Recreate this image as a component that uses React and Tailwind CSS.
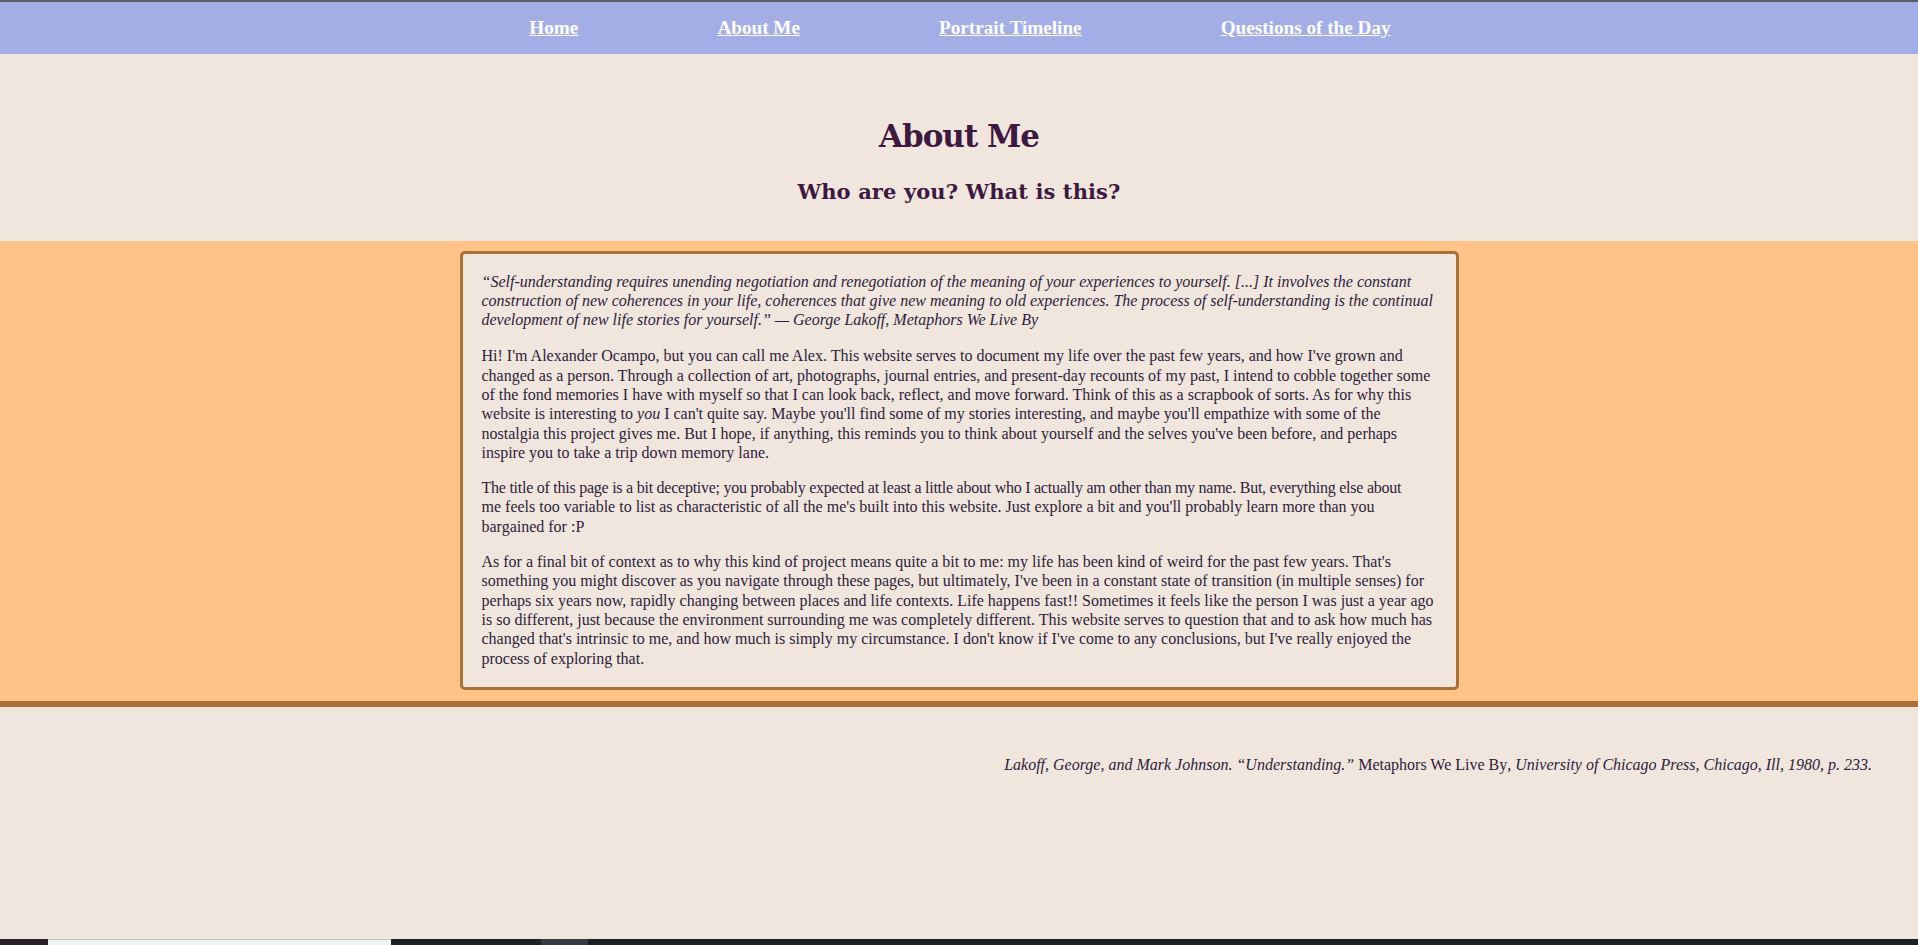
export default function App() {
  const serif = { fontFamily: '"Liberation Serif", "Times New Roman", serif' };
  const heading = { fontFamily: '"DejaVu Serif", Georgia, serif' };
  const links = ["Home", "About Me", "Portrait Timeline", "Questions of the Day"];
  return (
    <div className="min-h-[945px] flex flex-col bg-[#f0e6de]" style={serif}>
      <nav className="border-t-2 border-[#5b5d6b] bg-[#a3aee6] h-[54px] flex items-center justify-center gap-[139px] pl-[2px]">
        {links.map((l) => (
          <a key={l} href="#" className="text-white font-bold underline text-[19.2px] leading-[22px]">
            {l}
          </a>
        ))}
      </nav>
      <header className="pt-[64px] pb-[37px] text-center text-[#3d1840]" style={heading}>
        <h1 className="text-[31px] font-black leading-[37px] tracking-[-1px]">About Me</h1>
        <h2 className="mt-[24px] text-[21px] font-black leading-[25px] tracking-[0.1px]">Who are you? What is this?</h2>
      </header>
      <section className="bg-[#ffc388] border-b-[6px] border-[#a9703a] pt-[10px] pb-[11px]">
        <div className="mx-auto w-[999px] rounded-[5px] border-[3px] border-[#a9703a] bg-[#f0e6de] px-[19px] pt-[19px] pb-[19px] text-[16px] leading-[19.3px] text-[#2e1d3a]">
          <p className="italic leading-[18.8px]">
            “Self-understanding requires unending negotiation and renegotiation of the meaning of your experiences to yourself. [...] It involves the constant construction of new coherences in your life, coherences that give new meaning to old experiences. The process of self-understanding is the continual development of new life stories for yourself.” — George Lakoff, Metaphors We Live By
          </p>
          <p className="mt-[17px]">
            Hi! I'm Alexander Ocampo, but you can call me Alex. This website serves to document my life over the past few years, and how I've grown and changed as a person. Through a collection of art, photographs, journal entries, and present-day recounts of my past, I intend to cobble together some of the fond memories I have with myself so that I can look back, reflect, and move forward. Think of this as a scrapbook of sorts. As for why this website is interesting to <i>you</i> I can't quite say. Maybe you'll find some of my stories interesting, and maybe you'll empathize with some of the nostalgia this project gives me. But I hope, if anything, this reminds you to think about yourself and the selves you've been before, and perhaps inspire you to take a trip down memory lane.
          </p>
          <p className="mt-[16px]">
            <span className="whitespace-nowrap tracking-[-0.25px]">The title of this page is a bit deceptive; you probably expected at least a little about who I actually am other than my name. But, everything else about</span>
            <br />
            me feels too variable to list as characteristic of all the me's built into this website. Just explore a bit and you'll probably learn more than you bargained for :P
          </p>
          <p className="mt-[16px]">
            As for a final bit of context as to why this kind of project means quite a bit to me: my life has been kind of weird for the past few years. That's something you might discover as you navigate through these pages, but ultimately, I've been in a constant state of transition (in multiple senses) for perhaps six years now, rapidly changing between places and life contexts. Life happens fast!! Sometimes it feels like the person I was just a year ago is so different, just because the environment surrounding me was completely different. This website serves to question that and to ask how much has changed that's intrinsic to me, and how much is simply my circumstance. I don't know if I've come to any conclusions, but I've really enjoyed the process of exploring that.
          </p>
        </div>
      </section>
      <footer className="pt-[49px] pr-[46px] text-right text-[16px] leading-[18px] text-[#2e1d3a]">
        <i>Lakoff, George, and Mark Johnson. “Understanding.” </i>Metaphors We Live By<i>, University of Chicago Press, Chicago, Ill, 1980, p. 233.</i>
      </footer>
      <div className="mt-auto h-[6px] flex">
        <div className="w-[48px] bg-[#2a1f24]" />
        <div className="w-[343px] bg-[#f2f4f3] border-t border-[#c4c4c4]" />
        <div className="w-[150px] bg-[#1c2027]" />
        <div className="w-[47px] bg-[#353b45]" />
        <div className="flex-1 bg-[#1c2027]" />
      </div>
    </div>
  );
}
